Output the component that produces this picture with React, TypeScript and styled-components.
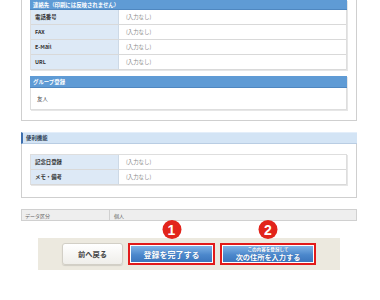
import React from "react";
import styled, { createGlobalStyle } from "styled-components";

const Global = createGlobalStyle`
  html, body { margin: 0; padding: 0; background: #fff; }
  body { font-family: "Noto Sans CJK JP", "Liberation Sans", sans-serif; }
`;

const Page = styled.div`
  width: 380px;
  height: 300px;
  overflow: hidden;
  background: #fff;
  display: flex;
  flex-direction: column;
  align-items: flex-start;
`;

const Panel = styled.div`
  margin-left: 21px;
  width: 336px;
  box-sizing: border-box;
  border: 1px solid #cfcfcf;
  border-top: none;
  padding: 0 9px 10px 8px;
  display: flex;
  flex-direction: column;
`;

const Block = styled.div<{ $gap?: number }>`
  margin-top: ${(p) => p.$gap ?? 0}px;
  display: flex;
  flex-direction: column;
  box-shadow: 1px 1px 0 #e6e6e6;
`;

const BlueHead = styled.div<{ $h: number }>`
  height: ${(p) => p.$h}px;
  background: #5f9bd5;
  border-bottom: 1px solid #4f87c0;
  box-sizing: border-box;
  color: #fff;
  font-weight: 700;
  font-size: 5.4px;
  display: flex;
  align-items: center;
  padding-left: 3px;
  white-space: nowrap;
`;

const Table = styled.div<{ $topLine?: boolean }>`
  display: grid;
  grid-template-columns: 88px 1fr;
  border-left: 1px solid #dedede;
  border-right: 1px solid #dedede;
  border-top: ${(p) => (p.$topLine ? "1px solid #dedede" : "none")};
`;

const Label = styled.div`
  height: 15px;
  box-sizing: border-box;
  background: #dde9f6;
  border-bottom: 1px solid #d9d9d9;
  border-right: 1px solid #cdd9e6;
  font-size: 5.4px;
  font-weight: 700;
  color: #333;
  display: flex;
  align-items: center;
  padding-left: 4px;
`;

const Value = styled.div`
  height: 15px;
  box-sizing: border-box;
  background: #fff;
  border-bottom: 1px solid #d9d9d9;
  font-size: 5.4px;
  color: #888;
  display: flex;
  align-items: center;
  padding-left: 7px;
`;

const GroupBody = styled.div`
  height: 22px;
  box-sizing: border-box;
  border: 1px solid #dedede;
  border-top: none;
  font-size: 5.4px;
  color: #444;
  display: flex;
  align-items: center;
  padding-left: 6px;
`;

const SectionHead = styled.div`
  margin-left: 21px;
  margin-top: 11px;
  width: 336px;
  height: 12px;
  box-sizing: border-box;
  background: #d3e4f5;
  border-left: 2px solid #3d6fae;
  border-top: 1px solid #e3eefa;
  border-bottom: 1px solid #b9cde3;
  font-size: 5.4px;
  font-weight: 700;
  color: #2f3f55;
  display: flex;
  align-items: center;
  padding-left: 3px;
`;

const SectionBody = styled(Panel)`
  padding: 10px 9px 12px 8px;
`;

const DataRow = styled.div`
  margin-left: 21px;
  margin-top: 11px;
  width: 336px;
  height: 12px;
  box-sizing: border-box;
  border: 1px solid #d0d0d0;
  background: #eeeeee;
  display: grid;
  grid-template-columns: 87px 1fr;
  font-size: 5px;
  color: #666;
`;

const DataCell = styled.div<{ $div?: boolean }>`
  display: flex;
  align-items: center;
  padding-left: ${(p) => (p.$div ? 4 : 3)}px;
  border-left: ${(p) => (p.$div ? "1px solid #d0d0d0" : "none")};
`;

const ButtonBar = styled.div`
  margin-left: 38px;
  margin-top: 17px;
  width: 302px;
  height: 32px;
  background: #ece9df;
  display: flex;
  align-items: center;
  justify-content: center;
  gap: 5px;
`;

const BackButton = styled.div`
  width: 61px;
  height: 22px;
  box-sizing: border-box;
  border: 1px solid #d2cfc6;
  border-radius: 3px;
  background: linear-gradient(#ffffff, #efeeea);
  box-shadow: 0 1px 1px rgba(0, 0, 0, 0.12);
  font-size: 7.3px;
  font-weight: 700;
  color: #444;
  display: flex;
  align-items: center;
  justify-content: center;
`;

const Highlight = styled.div<{ $w: number }>`
  position: relative;
  width: ${(p) => p.$w}px;
  height: 22px;
  box-sizing: border-box;
  border: 2px solid #e21a1a;
  background: #e21a1a;
  display: flex;
`;

const BlueButton = styled.div`
  flex: 1;
  background: linear-gradient(#7fb2e6, #4c88cc 55%, #3b76bd);
  border: 1px solid #fff;
  color: #fff;
  font-weight: 700;
  display: flex;
  flex-direction: column;
  align-items: center;
  justify-content: center;
  text-shadow: 0 0 1px rgba(0, 40, 100, 0.4);
  overflow: hidden;
`;

const Big = styled.span<{ $size: number }>`
  display: block;
  font-size: ${(p) => p.$size}px;
  line-height: 9px;
  height: 9px;
`;

const Small = styled.span`
  display: block;
  font-size: 4.6px;
  line-height: 5px;
  height: 5px;
  margin-bottom: 1px;
  font-weight: 700;
`;

const Badge = styled.div`
  position: absolute;
  left: 50%;
  top: -25px;
  transform: translateX(-50%);
  width: 19px;
  height: 19px;
  border-radius: 50%;
  background: #e2241b;
  color: #fff;
  font-family: "Liberation Sans", sans-serif;
  font-weight: 700;
  font-size: 14px;
  display: flex;
  align-items: center;
  justify-content: center;
`;

const contactRows = [
  ["電話番号", "(入力なし)"],
  ["FAX", "(入力なし)"],
  ["E-Mail", "(入力なし)"],
  ["URL", "(入力なし)"],
];

const utilRows = [
  ["記念日登録", "(入力なし)"],
  ["メモ・備考", "(入力なし)"],
];

export default function App() {
  return (
    <Page>
      <Global />
      <Panel>
        <Block>
          <BlueHead $h={10}>連絡先（印刷には反映されません）</BlueHead>
          <Table>
            {contactRows.map(([l, v]) => (
              <React.Fragment key={l}>
                <Label>{l}</Label>
                <Value>{v}</Value>
              </React.Fragment>
            ))}
          </Table>
        </Block>
        <Block $gap={6}>
          <BlueHead $h={12}>グループ登録</BlueHead>
          <GroupBody>友人</GroupBody>
        </Block>
      </Panel>
      <SectionHead>便利機能</SectionHead>
      <SectionBody>
        <Block>
          <Table $topLine>
            {utilRows.map(([l, v]) => (
              <React.Fragment key={l}>
                <Label>{l}</Label>
                <Value>{v}</Value>
              </React.Fragment>
            ))}
          </Table>
        </Block>
      </SectionBody>
      <DataRow>
        <DataCell>データ区分</DataCell>
        <DataCell $div>個人</DataCell>
      </DataRow>
      <ButtonBar>
        <BackButton>前へ戻る</BackButton>
        <Highlight $w={87}>
          <Badge>1</Badge>
          <BlueButton>
            <Big $size={8}>登録を完了する</Big>
          </BlueButton>
        </Highlight>
        <Highlight $w={96}>
          <Badge>2</Badge>
          <BlueButton>
            <Small>この内容を登録して</Small>
            <Big $size={7.2}>次の住所を入力する</Big>
          </BlueButton>
        </Highlight>
      </ButtonBar>
    </Page>
  );
}
